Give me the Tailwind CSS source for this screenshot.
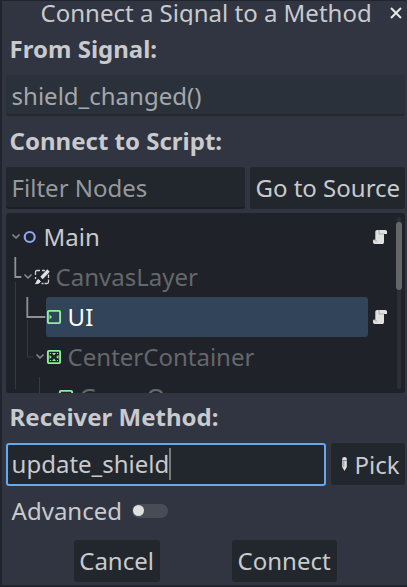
<!DOCTYPE html>
<html lang="en">
<head>
<meta charset="utf-8">
<title>Connect a Signal to a Method</title>
<script src="https://cdn.jsdelivr.net/npm/@tailwindcss/browser@4"></script>
</head>
<body class="bg-[#303541] overflow-hidden">
<svg class="hidden">
  <symbol id="script" viewBox="0 0 16 16">
    <path d="M5.300 1h8c1.200 0 1.700.8 1.700 2v2h-3v8c0 1.400-.8 2.200-2 2H3c-1.300 0-2-.8-2-2v-2h2.300V3c0-1.200.7-2 2-2z" fill="#e0e0e0"/>
    <path d="M7 1v4h5M1.500 11h2.500v2" fill="none" stroke="#aaacaf" stroke-width="1"/>
  </symbol>
  <symbol id="chev" viewBox="0 0 8 6">
    <path d="M1 1l3 3 3-3" fill="none" stroke="#85878b" stroke-width="1.700" stroke-linecap="round" stroke-linejoin="round"/>
  </symbol>
</svg>
<main class="w-[407px] h-[587px] border-l-2 border-t border-[#20242c] border-b-2 pl-[3.600px] pr-[2px] flex flex-col overflow-hidden text-[24px] leading-[40px] text-[#c8cacd] whitespace-nowrap font-['Noto_Sans',sans-serif]">
  <header class="h-[24px] shrink-0 flex items-center overflow-hidden">
    <h1 class="ml-[35px] w-[331px] h-[24px] leading-[24px] overflow-hidden">Connect a Signal to a Method</h1>
    <svg class="ml-[17px] w-[13px] h-[13px] shrink-0" viewBox="0 0 13 13"><path d="M2 1l10 10M12 1l-10 10" stroke="#e6e6e6" stroke-width="2" fill="none"/></svg>
  </header>
  <h2 class="h-[50px] shrink-0 pl-[4px] pt-[4px] font-bold">From Signal:</h2>
  <div class="h-[41px] shrink-0 rounded-[3px] bg-[#2b313a] border-b-2 border-[#242931] pl-[6px] leading-[41px] text-[#a4a7ab]">shield_changed()</div>
  <h2 class="h-[51px] shrink-0 pl-[4px] pt-[5px] font-bold">Connect to Script:</h2>
  <div class="h-[42px] shrink-0 flex gap-[5px]">
    <div class="w-[239px] rounded-[3px] bg-[#22262d] border-b-2 border-[#1b1e23] pl-[6px] leading-[41px] text-[#96999c]">Filter Nodes</div>
    <button class="flex-1 rounded-[3px] bg-[#22262d] leading-[42px] pl-[1px]">Go to Source</button>
  </div>
  <section class="mt-[4px] h-[180px] shrink-0 rounded-[3px] bg-[#1f2229] overflow-hidden relative">
    <svg class="absolute left-0 top-0" width="60" height="180" viewBox="5.500 213 60 180" fill="none">
      <path d="M15 282v107M27 320v37h6M39 377v16" stroke="#36393f"/>
      <path d="M14.800 257v20h6M26.800 297v20h18" stroke="#8f9194" stroke-width="1.800"/>
    </svg>
    <div class="relative pt-[4px] h-full">
      <div class="h-[40px] flex items-center pl-[6px]">
        <svg class="w-[8px] h-[6px]"><use href="#chev"/></svg>
        <svg class="ml-[3px] w-[14px] h-[14px]" viewBox="0 0 14 14"><circle cx="6.700" cy="7" r="5" fill="none" stroke="#8da5f3" stroke-width="2.200"/></svg>
        <span class="ml-[7px] flex-1">Main</span>
        <svg class="mr-[17px] w-[16px] h-[16px]"><use href="#script"/></svg>
      </div>
      <div class="h-[40px] flex items-center pl-[18px] text-[#65676b]">
        <svg class="w-[8px] h-[6px]"><use href="#chev"/></svg>
        <svg class="ml-[2px] w-[16px] h-[16px]" viewBox="0 0 16 16" fill="none"><path d="M1.500 6V3Q1.500 1.500 3 1.500h3M8 1.500h3M1.500 8v2M14.500 5.500v3.500M14.500 10.500V13q0 1.500-1.500 1.500h-2.500M7.500 14.500h2" stroke="#cfd0d1" stroke-width="1.300"/><path d="M14.500 1.500L7.500 9" stroke="#e0e0e0" stroke-width="3.300"/><path d="M4.500 10.500l2 2q-1.500 2.500-5 2.200c1.500-1 .8-3.500 3-4.200z" fill="#e0e0e0" stroke="#e0e0e0"/></svg>
        <span class="ml-[6px]">CanvasLayer</span>
      </div>
      <div class="h-[40px] flex items-center pl-[40px] text-white">
        <div class="w-[322px] h-[40px] rounded-[3px] bg-[#314459] flex items-center">
          <svg class="w-[16px] h-[16px]" viewBox="0 0 16 16"><rect x="1.900" y="1.900" width="12.200" height="12.200" rx="1" fill="none" stroke="#8eef97" stroke-width="1.900"/><path d="M3.500 5.500L6 8l-2.500 2.500z" fill="#8eef97"/></svg>
          <span class="ml-[6px]">UI</span>
        </div>
        <svg class="ml-[4px] w-[16px] h-[16px]"><use href="#script"/></svg>
      </div>
      <div class="h-[40px] flex items-center pl-[30px] text-[#65676b]">
        <svg class="w-[8px] h-[6px]"><use href="#chev"/></svg>
        <svg class="ml-[2px] w-[16px] h-[16px]" viewBox="0 0 16 16"><rect x="1.900" y="1.900" width="12.200" height="12.200" rx="1" fill="none" stroke="#8eef97" stroke-width="1.900"/><path d="M6 4h4L8 6.500zM6 12h4L8 9.500zM3.500 6v4l2.300-2zM12.500 6v4l-2.300-2zM4 4h1v1H4zM11 4h1v1h-1zM4 11h1v1H4zM11 11h1v1h-1z" fill="#8eef97"/></svg>
        <span class="ml-[6px]">CenterContainer</span>
      </div>
      <div class="h-[40px] flex items-center pl-[52px] text-[#65676b]">
        <svg class="w-[16px] h-[16px]" viewBox="0 0 16 16"><rect x="1.900" y="1.900" width="12.200" height="12.200" rx="1" fill="none" stroke="#8eef97" stroke-width="1.900"/></svg>
        <span class="ml-[6px]">GameOver</span>
      </div>
    </div>
    <div class="absolute right-[4px] top-[4px] w-[4px] h-[172px] rounded-full bg-[#2c2f35]"></div>
    <div class="absolute right-[3px] top-[9px] w-[6px] h-[68px] rounded-full bg-[#64666a]"></div>
  </section>
  <h2 class="h-[50px] shrink-0 pl-[4px] pt-[4px] font-bold">Receiver Method:</h2>
  <div class="h-[43px] shrink-0 flex gap-[5px]">
    <div class="w-[320px] rounded-[3px] bg-[#22262d] border-2 border-[#62a9ee] pl-[4px] flex items-center"><span class="-mt-[2px]">update_shield</span><i class="w-[1.500px] h-[32px] -mt-[2px] bg-[#77797d]"></i></div>
    <button class="flex-1 h-[42px] rounded-[3px] bg-[#22262d] flex items-center pl-[10px]">
      <svg class="w-[7px] h-[16px]" viewBox="0 0 7 16"><path d="M1.200 3q0-2 2.300-2t2.300 2v8l-2.300 4-2.300-4z" fill="#e0e0e0"/><path d="M1 4.500h5M2.800 5v6" stroke="#8b8d90" stroke-width="1"/></svg>
      <span class="ml-[7px] pt-px">Pick</span>
    </button>
  </div>
  <div class="h-[54px] shrink-0 flex items-center pl-[6px] pb-[5px]">
    <span>Advanced</span>
    <div class="ml-[10px] w-[36px] h-[14px] rounded-full bg-[#474c56] flex items-center pl-[1px]"><i class="w-[11px] h-[11px] rounded-full bg-[#e0e0e0]"></i></div>
  </div>
  <footer class="h-[42px] shrink-0 flex pl-[68px] gap-[72px] leading-[42px]">
    <button class="w-[86px] rounded-[3px] bg-[#22262d]">Cancel</button>
    <button class="w-[105px] rounded-[3px] bg-[#22262d]">Connect</button>
  </footer>
</main>
</body>
</html>
